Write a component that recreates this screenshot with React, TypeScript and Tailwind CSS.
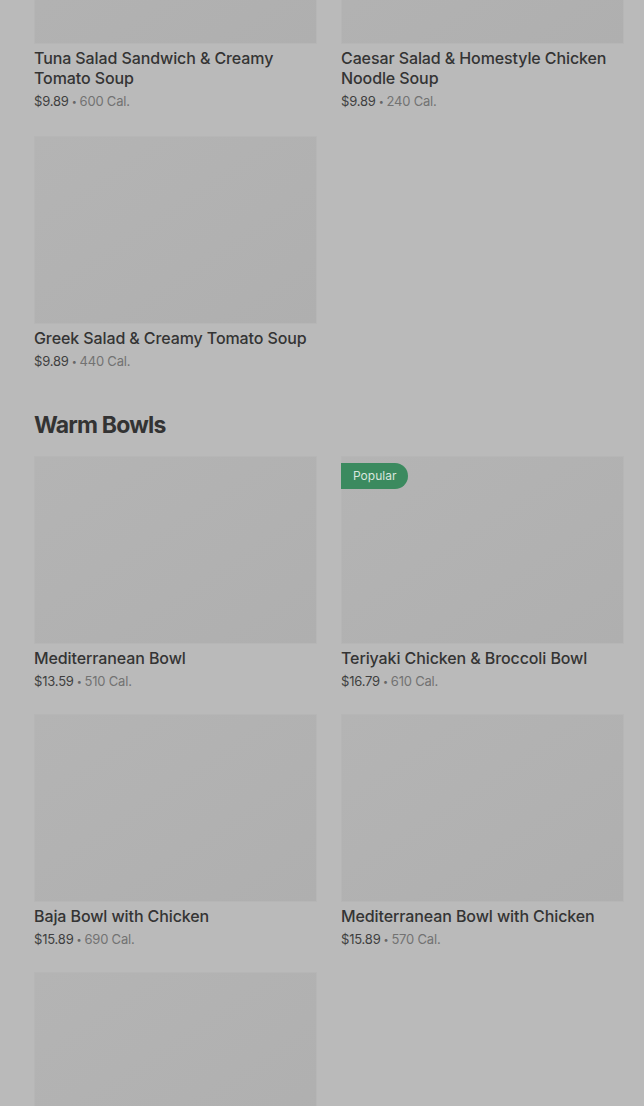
type Item = { name: string; price: string; cal: string; popular?: boolean };

const salads: Item[] = [
  { name: "Tuna Salad Sandwich & Creamy Tomato Soup", price: "$9.89", cal: "600 Cal." },
  { name: "Caesar Salad & Homestyle Chicken Noodle Soup", price: "$9.89", cal: "240 Cal." },
  { name: "Greek Salad & Creamy Tomato Soup", price: "$9.89", cal: "440 Cal." },
];

const bowls: Item[] = [
  { name: "Mediterranean Bowl", price: "$13.59", cal: "510 Cal." },
  { name: "Teriyaki Chicken & Broccoli Bowl", price: "$16.79", cal: "610 Cal.", popular: true },
  { name: "Baja Bowl with Chicken", price: "$15.89", cal: "690 Cal." },
  { name: "Mediterranean Bowl with Chicken", price: "$15.89", cal: "570 Cal." },
];

function Photo({ popular }: { popular?: boolean }) {
  return (
    <div className="relative h-[188px] bg-gradient-to-br from-[#b4b4b4] to-[#afafaf] border border-[#b6b6b6]">
      {popular && (
        <span className="absolute -left-px top-[6px] h-[26px] px-3 flex items-center rounded-r-full bg-[#3b8a5f] text-[12px] text-[#d9e6de]">
          Popular
        </span>
      )}
    </div>
  );
}

function MenuCard({ item }: { item: Item }) {
  return (
    <div className="flex flex-col">
      <Photo popular={item.popular} />
      <div className="mt-1 text-[16px] leading-5 font-medium tracking-[-0.1px] text-[#343434]">{item.name}</div>
      <div className="mt-[3px] text-[13px] leading-5 tracking-[-0.2px] text-[#3f3f3f]">
        {item.price}
        <span className="mx-[3px] text-[9px] align-[1px] text-[#666]">•</span>
        <span className="text-[#727272]">{item.cal}</span>
      </div>
    </div>
  );
}

export default function App() {
  return (
    <div
      className="h-[1106px] overflow-hidden bg-[#bababa]"
      style={{ fontFamily: "Inter, 'Noto Sans', sans-serif" }}
    >
      <div className="-mt-[144px] pl-[34px] pr-[20px]">
        <section>
          <div className="grid grid-cols-[283px_283px] gap-x-6 gap-y-6">
            {salads.map((s) => (
              <MenuCard key={s.name} item={s} />
            ))}
          </div>
        </section>
        <section className="mt-[37px]">
          <h2 className="text-[23px] leading-8 font-bold tracking-[-0.8px] text-[#333]">Warm Bowls</h2>
          <div className="mt-[15px] grid grid-cols-[283px_283px] gap-x-6 gap-y-[22px]">
            {bowls.map((b) => (
              <MenuCard key={b.name} item={b} />
            ))}
            <Photo />
          </div>
        </section>
      </div>
    </div>
  );
}
